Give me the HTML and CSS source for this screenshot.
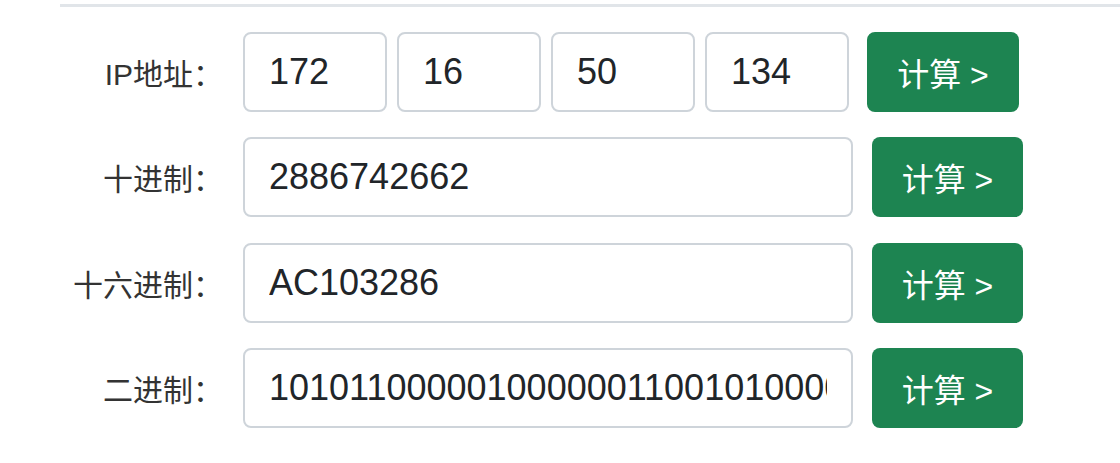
FILE: index.html
```html
<!DOCTYPE html>
<html lang="zh-CN">
<head>
<meta charset="utf-8">
<title>IP地址转换</title>
<link rel="stylesheet" href="styles.css">
</head>
<body>
<div class="page">
  <div class="divider"></div>
  <form class="converter">
    <div class="row">
      <label class="label">IP地址：</label>
      <div class="ip-group">
        <input class="field ip-part" type="text" value="172">
        <input class="field ip-part" type="text" value="16">
        <input class="field ip-part" type="text" value="50">
        <input class="field ip-part" type="text" value="134">
      </div>
      <button type="button" class="btn btn-first">计算 &gt;</button>
    </div>
    <div class="row">
      <label class="label">十进制：</label>
      <input class="field wide" type="text" value="2886742662">
      <button type="button" class="btn">计算 &gt;</button>
    </div>
    <div class="row">
      <label class="label">十六进制：</label>
      <input class="field wide" type="text" value="AC103286">
      <button type="button" class="btn">计算 &gt;</button>
    </div>
    <div class="row">
      <label class="label">二进制：</label>
      <input class="field wide" type="text" value="10101100000100000011001010000110">
      <button type="button" class="btn">计算 &gt;</button>
    </div>
  </form>
</div>
</body>
</html>
```

FILE: styles.css
```css
* { box-sizing: border-box; }

html, body {
  margin: 0;
  padding: 0;
  background: #ffffff;
}

body {
  font-family: "Liberation Sans", "Noto Sans CJK SC", sans-serif;
  color: #212529;
}

.page {
  padding: 4px 0 0 60px;
}

.divider {
  height: 3px;
  background: #e1e5e9;
}

.converter {
  display: flex;
  flex-direction: column;
  gap: 25.3px;
  padding-top: 25px;
}

.row {
  display: flex;
  align-items: center;
  height: 80px;
}

.label {
  width: 183px;
  padding-right: 20px;
  text-align: right;
  font-size: 30px;
  color: #333333;
  white-space: nowrap;
}

.ip-group {
  display: flex;
  gap: 10px;
}

.field {
  height: 80px;
  padding: 0 24px;
  border: 2px solid #ced4da;
  border-radius: 8px;
  background: #ffffff;
  font-family: "Liberation Sans", "Noto Sans CJK SC", sans-serif;
  font-size: 36px;
  color: #212529;
  outline: none;
}

.ip-part {
  width: 144px;
}

.wide {
  width: 610px;
}

.btn {
  height: 80px;
  width: 151px;
  margin-left: 19px;
  border: none;
  border-radius: 8px;
  background: #1d8451;
  color: #ffffff;
  font-family: "Liberation Sans", "Noto Sans CJK SC", sans-serif;
  font-size: 32px;
  cursor: pointer;
}

.btn-first {
  width: 152px;
  margin-left: 18px;
}
```
